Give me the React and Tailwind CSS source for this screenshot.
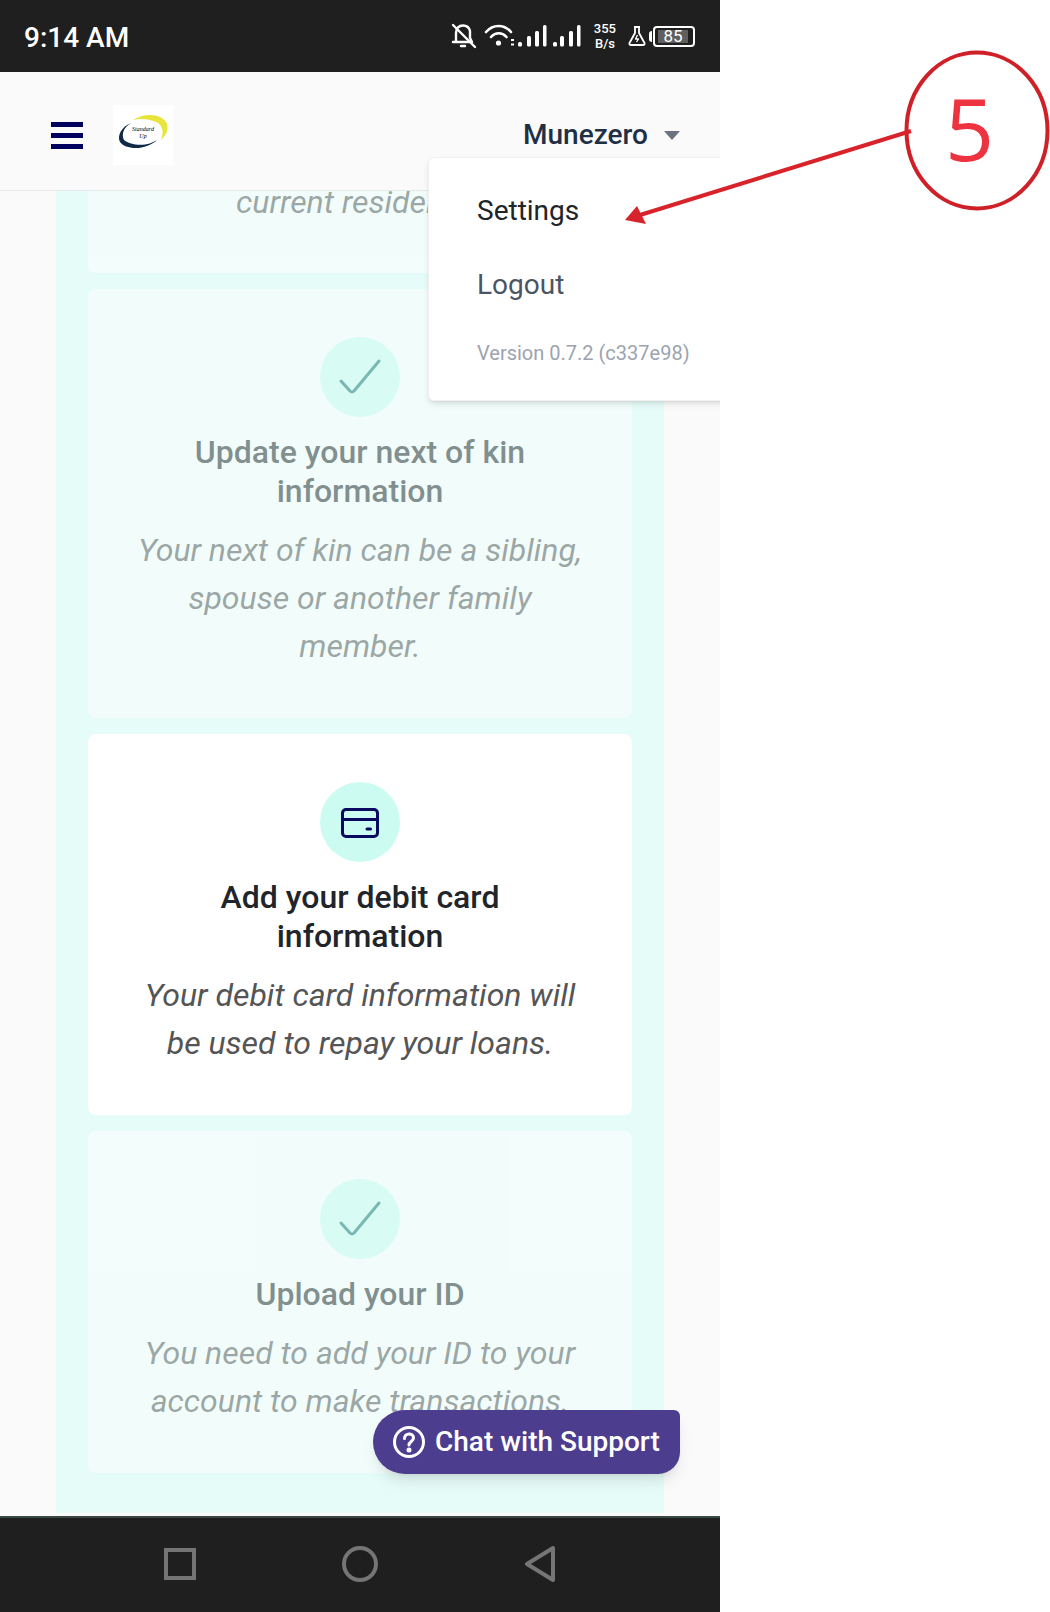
import React from 'react';

const steps = [
  {
    title: ['Update your next of kin', 'information'],
    body: ['Your next of kin can be a sibling,', 'spouse or another family', 'member.'],
    done: true,
  },
  {
    title: ['Add your debit card', 'information'],
    body: ['Your debit card information will', 'be used to repay your loans.'],
    done: false,
  },
  {
    title: ['Upload your ID'],
    body: ['You need to add your ID to your', 'account to make transactions.'],
    done: true,
  },
];

const CheckIcon = () => (
  <svg width="80" height="80" viewBox="0 0 80 80" fill="none">
    <path d="M21 44 L30 54 Q32 56 34 54 L59 24" stroke="#0f766e" strokeWidth="3" strokeLinecap="round" strokeLinejoin="round" />
  </svg>
);

const CardIcon = () => (
  <svg width="80" height="80" viewBox="0 0 80 80" fill="none" stroke="#0a0a60" strokeWidth="3" strokeLinecap="round">
    <rect x="22.5" y="27.5" width="35" height="27" rx="3.5" />
    <path d="M22.5 37.5 H57.5" />
    <path d="M47 47 H50.5" />
  </svg>
);

const StepCard = ({ step }) => (
  <div className={`flex flex-col items-center bg-white rounded-lg pt-12 pb-12 text-center ${step.done ? 'opacity-50' : ''}`}>
    <div className="w-20 h-20 rounded-full bg-[#ccfbf1]">
      {step.done ? <CheckIcon /> : <CardIcon />}
    </div>
    <h3 className="mt-4 text-[32px] leading-[39px] font-medium text-[#212529]">
      {step.title.map((line) => <div key={line}>{line}</div>)}
    </h3>
    <p className="mt-[15px] text-[32px] leading-[48px] italic text-[#555555]">
      {step.body.map((line) => <span key={line} className="block">{line}</span>)}
    </p>
  </div>
);

const StatusIcons = () => (
  <div className="flex items-center text-white">
    <svg width="26" height="26" viewBox="0 0 26 26" fill="none" stroke="white" strokeWidth="2.4" strokeLinecap="round" strokeLinejoin="round">
      <path d="M5 19 V10 C5 5 8 2.5 12 2.5 C15 2.5 18 4 19 8 V15 L21 19 H2" />
      <path d="M10 23 H14" />
      <path d="M2 2 L24 24" />
    </svg>
    <svg className="ml-[7px]" width="94" height="26" viewBox="0 0 94 26" fill="white" stroke="none">
      <path d="M2 9 C9 1 20 1 27 9 M7 14 C11.5 9 18 9 22.5 14" stroke="white" strokeWidth="2.6" fill="none" strokeLinecap="round" />
      <circle cx="14.5" cy="20" r="2.6" />
      <rect x="27" y="16" width="3" height="2" />
      <rect x="27" y="20.5" width="3" height="2" />
      <rect x="34" y="19" width="4" height="4.5" rx="1.5" />
      <rect x="43" y="13" width="4" height="10.5" rx="1.5" />
      <rect x="51" y="8" width="4" height="15.5" rx="1.5" />
      <rect x="59" y="2" width="3.5" height="21.5" rx="1.5" />
      <rect x="69" y="19" width="4" height="4.5" rx="1.5" />
      <rect x="76" y="13" width="4" height="10.5" rx="1.5" />
      <rect x="85" y="8" width="4" height="15.5" rx="1.5" />
    </svg>
    <svg className="ml-[-1px]" width="5" height="26" viewBox="0 0 5 26" fill="white">
      <rect x="0" y="2" width="3.5" height="21.5" rx="1.5" />
    </svg>
    <div className="ml-[12px] flex flex-col items-center text-[13px] leading-[15px] font-medium">
      <span>355</span>
      <span>B/s</span>
    </div>
    <svg className="ml-[12px]" width="18" height="22" viewBox="0 0 18 22" fill="none" stroke="white" strokeWidth="1.8" strokeLinejoin="round">
      <path d="M6 2 H12 M7 2 V8 L1.5 18 Q1 20 3 20 H15 Q17 20 16.5 18 L11 8 V2" />
      <path d="M9.5 10 L7.5 14 H10.5 L8.5 17" strokeWidth="1.3" />
    </svg>
    <div className="ml-[3px] w-[3px] h-[11px] bg-white rounded-l-sm" />
    <div className="ml-[1px] w-[42px] h-[21px] border-2 border-white rounded-[4px] flex items-center pl-[3px] pr-[5px]">
      <div className="flex-1 h-[13px] bg-[#5f5f5f] flex items-center justify-center text-[17px] leading-none">85</div>
    </div>
  </div>
);

const Logo = () => (
  <div className="ml-[30px] w-[60px] h-[60px] bg-white relative flex items-center justify-center">
    <svg className="absolute inset-0" width="60" height="60" viewBox="0 0 60 60" fill="none">
      <path d="M20 15 C32 7 50 9 54 19 C56 26 52 31 48 35 C51 27 50 20 43 17 C36 14 28 13 20 15 Z" fill="#e8e43c" />
      <path d="M18 18 C8 22 4 31 7 37 C12 45 34 46 45 34 C36 42 18 41 11 35 C8 29 11 22 18 18 Z" fill="#0f2a47" />
    </svg>
    <span className="relative font-['Liberation_Serif',serif] italic text-[6px] leading-[7px] text-center text-black mt-[-4px]">Standard<br />Up</span>
  </div>
);

const NavBar = () => (
  <div className="h-[96px] bg-[#1f1f1f] border-t-2 border-[#3c4846] flex items-center pb-[2px] shrink-0">
    <div className="ml-[164px] w-8 h-8 border-4 border-[#757575]" />
    <div className="ml-[146px] w-9 h-9 rounded-full border-4 border-[#757575]" />
    <svg className="ml-[146px]" width="32" height="36" viewBox="0 0 32 36" fill="none">
      <path d="M29 2 L3 18 L29 34 Z" stroke="#757575" strokeWidth="4" strokeLinejoin="round" />
    </svg>
  </div>
);

const App = () => {
  return (
    <div className="relative w-[1050px] h-[1612px] bg-white overflow-hidden font-['Roboto',sans-serif]">
      <div className="relative w-[720px] h-full flex flex-col bg-[#fafafa] overflow-hidden">
        <div className="h-[72px] bg-[#1f1f1f] flex items-center justify-between pl-6 pr-[25px] shrink-0">
          <span className="text-white text-[28px] font-medium pt-1">9:14 AM</span>
          <StatusIcons />
        </div>

        <header className="relative z-10 h-[119px] bg-[#fafafa] border-b border-[#e5e7eb] flex items-center pt-2 shrink-0">
          <div className="ml-[51px] w-8 flex flex-col gap-[6px]">
            <div className="h-[5px] bg-[#00005f]" />
            <div className="h-[5px] bg-[#00005f]" />
            <div className="h-[5px] bg-[#00005f]" />
          </div>
          <Logo />
          <div className="ml-auto mr-10 flex items-center gap-4">
            <span className="text-[28px] font-medium text-[#1f2f46]">Munezero</span>
            <div className="w-0 h-0 border-l-[8px] border-r-[8px] border-t-[9px] border-l-transparent border-r-transparent border-t-[#6b7280]" />
          </div>
        </header>

        <main className="flex-1 overflow-hidden">
          <div className="mx-14 bg-[#e6fcf8] px-8 mt-[-13px] flex flex-col gap-4 pb-10">
            <div className="bg-white opacity-50 rounded-b-lg pb-[47px] text-center">
              <p className="text-[32px] leading-[48px] italic text-[#555555]">current residence.</p>
            </div>
            {steps.map((step) => <StepCard key={step.title[0]} step={step} />)}
          </div>
        </main>

        <NavBar />

        <div className="absolute z-20 left-[428px] top-[157px] w-[320px] h-[244px] bg-white rounded-md border border-[#f0f0f0] shadow-md pl-[48px] pt-[35px]">
          <div className="text-[28px] leading-9 text-[#212529]">Settings</div>
          <div className="mt-[38px] text-[28px] leading-9 text-[#4b5563]">Logout</div>
          <div className="mt-9 text-[20px] leading-7 text-[#9ca3af]">Version 0.7.2 (c337e98)</div>
        </div>

        <button className="absolute z-20 left-[373px] top-[1410px] w-[307px] h-16 bg-[#4c3d8f] rounded-l-[32px] rounded-tr-[6px] rounded-br-[22px] shadow-lg flex items-center pl-5 gap-[10px] text-white">
          <svg width="32" height="32" viewBox="0 0 32 32" fill="none" stroke="white" strokeWidth="3" strokeLinecap="round">
            <circle cx="16" cy="16" r="14.5" />
            <path d="M11.5 12.5 C11.5 6.5 20.5 6.5 20.5 12 C20.5 15.5 16 15.5 16 19" />
            <circle cx="16" cy="24" r="1" fill="white" />
          </svg>
          <span className="text-[28px] font-medium leading-none">Chat with Support</span>
        </button>
      </div>

      <svg className="absolute z-30 left-[600px] top-[40px]" width="450" height="200" viewBox="600 40 450 200" fill="none">
        <ellipse cx="977" cy="130.5" rx="70.5" ry="78" stroke="#cf2027" strokeWidth="4" />
        <path d="M911 131 L640 215" stroke="#d9232b" strokeWidth="4" />
        <path d="M625 220 L637 206 L646 224 Z" fill="#d9232b" />
      </svg>
      <span className="absolute z-30 left-[945px] top-[75px] text-[86px] leading-[106px] text-[#ee3340] font-['Open_Sans',sans-serif]">5</span>
    </div>
  );
};

export default App;
